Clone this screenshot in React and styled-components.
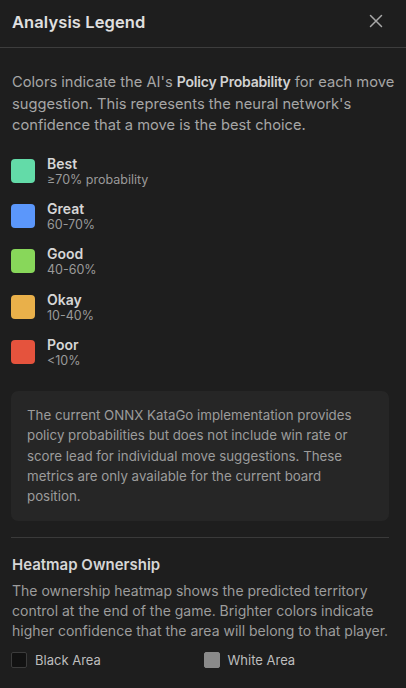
import React from "react";
import styled, { createGlobalStyle } from "styled-components";

const GlobalStyle = createGlobalStyle`
  html, body {
    margin: 0;
    padding: 0;
    background: #1e1e1e;
  }
  body {
    font-family: Inter, "Noto Sans", "Liberation Sans", sans-serif;
    -webkit-font-smoothing: antialiased;
  }
`;

const levels = [
  { name: "Best", range: "≥70% probability", color: "#63dba8" },
  { name: "Great", range: "60-70%", color: "#5b97fb" },
  { name: "Good", range: "40-60%", color: "#88d75a" },
  { name: "Okay", range: "10-40%", color: "#e9b04a" },
  { name: "Poor", range: "<10%", color: "#e5533d" },
];

const CloseIcon = () => (
  <svg width="14" height="14" viewBox="0 0 14 14" fill="none">
    <path
      d="M1.5 1.5L12.5 12.5M12.5 1.5L1.5 12.5"
      stroke="#a8a8a8"
      strokeWidth="1.5"
      strokeLinecap="round"
    />
  </svg>
);

const App = () => {
  return (
    <>
      <GlobalStyle />
      <Panel>
        <Header>
          <Title>Analysis Legend</Title>
          <CloseButton aria-label="Close">
            <CloseIcon />
          </CloseButton>
        </Header>
        <Body>
          <Intro>
            Colors indicate the AI's <strong>Policy Probability</strong> for
            each move suggestion. This represents the neural network's
            confidence that a move is the best choice.
          </Intro>
          <LegendList>
            {levels.map((l) => (
              <LegendItem key={l.name}>
                <Swatch $color={l.color} />
                <LegendText>
                  <LegendName>{l.name}</LegendName>
                  <LegendRange>{l.range}</LegendRange>
                </LegendText>
              </LegendItem>
            ))}
          </LegendList>
          <InfoBox>
            The current ONNX KataGo implementation provides policy
            probabilities but does not include win rate or score lead for
            individual move suggestions. These metrics are only available for
            the current board position.
          </InfoBox>
          <Divider />
          <Section>
            <SectionTitle>Heatmap Ownership</SectionTitle>
            <SectionText>
              The ownership heatmap shows the predicted territory control at
              the end of the game. Brighter colors indicate higher confidence
              that the area will belong to that player.
            </SectionText>
            <AreaGrid>
              <AreaItem>
                <AreaSwatch $color="#121212" $border="#3c3c3c" />
                Black Area
              </AreaItem>
              <AreaItem>
                <AreaSwatch $color="#8a8a8a" $border="#8a8a8a" />
                White Area
              </AreaItem>
            </AreaGrid>
          </Section>
        </Body>
      </Panel>
    </>
  );
};

export default App;

const Panel = styled.div`
  width: 406px;
  height: 688px;
  background: #1e1e1e;
  overflow: hidden;
  box-sizing: border-box;
`;

const Header = styled.div`
  height: 48px;
  box-sizing: border-box;
  padding: 0 20px 0 12px;
  display: flex;
  align-items: center;
  justify-content: space-between;
  border-bottom: 1px solid #3d3d3d;
`;

const Title = styled.h2`
  margin: 0;
  font-size: 16.5px;
  font-weight: 600;
  color: #e0e0e0;
  letter-spacing: 0.1px;
  padding-bottom: 4px;
`;

const CloseButton = styled.button`
  background: none;
  border: none;
  padding: 0;
  width: 20px;
  height: 20px;
  display: flex;
  align-items: center;
  justify-content: center;
  cursor: pointer;
  margin-bottom: 6px;
`;

const Body = styled.div`
  padding: 23px 17px 0 12px;
`;

const Intro = styled.p`
  margin: 0 -6px 0 0;
  font-size: 14.7px;
  line-height: 21.5px;
  color: #a6a6a6;

  strong {
    color: #d2d2d2;
    font-size: 14px;
    font-weight: 600;
    letter-spacing: -0.2px;
  }
`;

const LegendList = styled.div`
  margin-top: 18px;
  display: flex;
  flex-direction: column;
  gap: 13.4px;
`;

const LegendItem = styled.div`
  display: flex;
  align-items: center;
  gap: 12px;
  height: 32px;
`;

const Swatch = styled.div`
  width: 24px;
  height: 24px;
  border-radius: 4px;
  background: ${(p) => p.$color};
  flex-shrink: 0;
  margin-left: -1px;
`;

const LegendText = styled.div`
  display: flex;
  flex-direction: column;
`;

const LegendName = styled.div`
  font-size: 14px;
  font-weight: 600;
  color: #d6d6d6;
  line-height: 17px;
`;

const LegendRange = styled.div`
  font-size: 12.5px;
  color: #9a9a9a;
  line-height: 15px;
`;

const InfoBox = styled.div`
  margin-top: 23px;
  margin-left: -1px;
  background: #262626;
  border-radius: 7px;
  padding: 14px 16px;
  font-size: 13.3px;
  line-height: 20.3px;
  color: #9c9c9c;
`;

const Divider = styled.div`
  height: 1px;
  background: #3a3a3a;
  margin: 16px 0 0 -1px;
`;

const Section = styled.div`
  padding-top: 17px;
`;

const SectionTitle = styled.h3`
  margin: 0;
  font-size: 15px;
  font-weight: 600;
  color: #d6d6d6;
  line-height: 20px;
`;

const SectionText = styled.p`
  margin: 6px 0 0;
  font-size: 14px;
  line-height: 20px;
  color: #9c9c9c;
`;

const AreaGrid = styled.div`
  margin-top: 10px;
  display: grid;
  grid-template-columns: 1fr 1fr;
  column-gap: 8px;
`;

const AreaItem = styled.div`
  display: flex;
  align-items: center;
  gap: 8px;
  font-size: 13px;
  color: #bdbdbd;
  height: 18px;
`;

const AreaSwatch = styled.div`
  width: 14px;
  height: 14px;
  border-radius: 2px;
  background: ${(p) => p.$color};
  border: 1px solid ${(p) => p.$border};
  margin-left: -1px;
`;
